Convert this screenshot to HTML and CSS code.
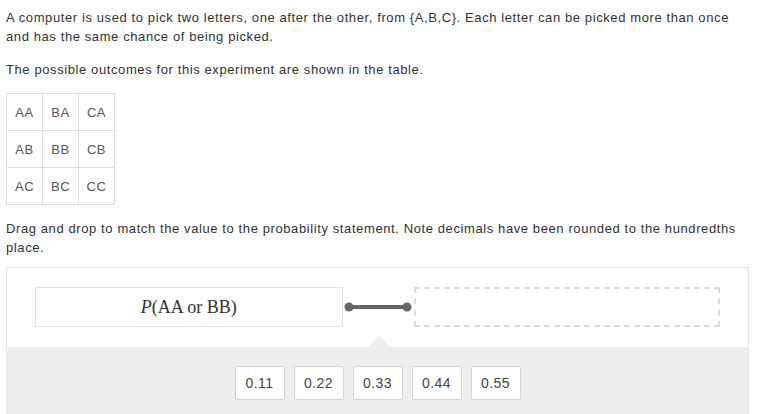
FILE: index.html
```html
<!DOCTYPE html>
<html>
<head>
<meta charset="utf-8">
<link rel="stylesheet" href="styles.css">
</head>
<body>
<p class="para">A computer is used to pick two letters, one after the other, from {A,B,C}. Each letter can be picked more than once and has the same chance of being picked.</p>
<p class="para">The possible outcomes for this experiment are shown in the table.</p>
<table class="outcomes">
  <tr><td>AA</td><td>BA</td><td>CA</td></tr>
  <tr><td>AB</td><td>BB</td><td>CB</td></tr>
  <tr><td>AC</td><td>BC</td><td>CC</td></tr>
</table>
<p class="para instr">Drag and drop to match the value to the probability statement. Note decimals have been rounded to the hundredths place.</p>
<div class="widget">
  <div class="match-row">
    <div class="statement"><span class="math"><i>P</i>(AA or BB)</span></div>
    <svg class="connector" width="71" height="12" viewBox="0 0 71 12">
      <line x1="6" y1="6" x2="64" y2="6" stroke="#666" stroke-width="4"/>
      <circle cx="6" cy="6" r="4.5" fill="#666"/>
      <circle cx="64" cy="6" r="4.5" fill="#666"/>
    </svg>
    <div class="drop"></div>
    <div class="pointer"></div>
  </div>
  <div class="tray">
    <div class="chip">0.11</div>
    <div class="chip">0.22</div>
    <div class="chip">0.33</div>
    <div class="chip">0.44</div>
    <div class="chip">0.55</div>
  </div>
</div>
</body>
</html>
```
FILE: styles.css
```css
html, body {
  margin: 0;
  background: #fff;
}
body {
  padding: 8px 18px 0 6px;
  font-family: "Liberation Sans", Arial, sans-serif;
  font-size: 13px;
  line-height: 19px;
  letter-spacing: 0.6px;
  color: #333;
  height: 414px;
  box-sizing: border-box;
  overflow: hidden;
}
.para {
  margin: 0 0 14px 0;
}
.outcomes {
  border-collapse: collapse;
  margin: 0 0 14px 0;
}
.outcomes td {
  border: 1px solid #ddd;
  width: 36px;
  height: 37px;
  padding: 0;
  text-align: center;
  color: #555;
  font-size: 13px;
  letter-spacing: 0.5px;
  box-sizing: border-box;
}
.instr {
  margin-bottom: 10px;
}
.widget {
  border: 1px solid #e6e6e6;
  border-bottom: none;
  width: 743px;
  box-sizing: border-box;
}
.match-row {
  position: relative;
  display: flex;
  align-items: center;
  padding: 19px 28px 20px 28px;
}
.statement {
  width: 308px;
  height: 40px;
  border: 1px solid #e2e2e2;
  box-sizing: border-box;
  display: flex;
  align-items: center;
  justify-content: center;
}
.math {
  font-family: "Liberation Serif", "Times New Roman", serif;
  font-size: 18px;
  letter-spacing: 0;
  color: #333;
}
.math i {
  font-style: italic;
}
.connector {
  display: block;
  flex: none;
}
.drop {
  width: 307px;
  height: 40px;
  border: 2px dashed #dcdcdc;
  box-sizing: border-box;
}
.pointer {
  position: absolute;
  left: 361px;
  bottom: 0;
  width: 0;
  height: 0;
  border-left: 11px solid transparent;
  border-right: 11px solid transparent;
  border-bottom: 11px solid #efefef;
}
.tray {
  background: #efefef;
  height: 80px;
  display: flex;
  justify-content: center;
  align-items: flex-start;
  gap: 9px;
  padding-top: 19px;
  box-sizing: border-box;
}
.chip {
  width: 50px;
  height: 34px;
  background: #fff;
  border: 1px solid #d4d4d4;
  border-radius: 2px;
  box-sizing: border-box;
  display: flex;
  align-items: center;
  justify-content: center;
  font-size: 14px;
  letter-spacing: 0.4px;
  color: #444;
}
```
